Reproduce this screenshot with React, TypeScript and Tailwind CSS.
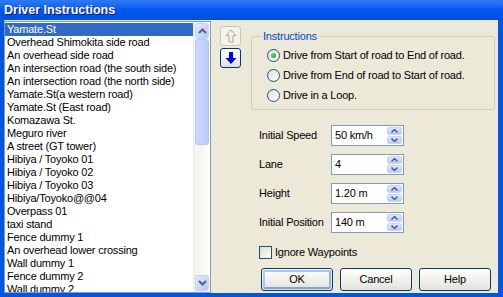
import React from "react";

const items = [
  "Yamate.St",
  "Overhead Shimokita side road",
  "An overhead side road",
  "An intersection road (the south side)",
  "An intersection road (the north side)",
  "Yamate.St(a western road)",
  "Yamate.St (East road)",
  "Komazawa St.",
  "Meguro river",
  "A street (GT tower)",
  "Hibiya / Toyoko 01",
  "Hibiya / Toyoko 02",
  "Hibiya / Toyoko 03",
  "Hibiya/Toyoko@@04",
  "Overpass 01",
  "taxi stand",
  "Fence dummy 1",
  "An overhead lower crossing",
  "Wall dummy 1",
  "Fence dummy 2",
  "Wall dummy 2",
];

function Chevron({ up }: { up?: boolean }) {
  return (
    <svg width="9" height="6" viewBox="0 0 9 6">
      <path
        d={up ? "M1 5 L4.5 1.5 L8 5" : "M1 1 L4.5 4.5 L8 1"}
        fill="none"
        stroke="#4D6185"
        strokeWidth="2"
      />
    </svg>
  );
}

function Spinner() {
  return (
    <div className="flex flex-col w-[15px] h-[17px] gap-[1px] mr-[1px]">
      <div className="flex-1 flex items-center justify-center rounded-[2px] bg-gradient-to-b from-[#DCE6FD] to-[#B9CCF8] border border-[#C3D3FD]">
        <svg width="7" height="4" viewBox="0 0 7 4">
          <path d="M0.5 3.5 L3.5 0.5 L6.5 3.5" fill="none" stroke="#4D6185" strokeWidth="1.5" />
        </svg>
      </div>
      <div className="flex-1 flex items-center justify-center rounded-[2px] bg-gradient-to-b from-[#DCE6FD] to-[#B9CCF8] border border-[#C3D3FD]">
        <svg width="7" height="4" viewBox="0 0 7 4">
          <path d="M0.5 0.5 L3.5 3.5 L6.5 0.5" fill="none" stroke="#4D6185" strokeWidth="1.5" />
        </svg>
      </div>
    </div>
  );
}

function Field({ label, value }: { label: string; value: string }) {
  return (
    <div className="flex items-center h-[21px]">
      <div className="w-[80px] pl-[8px]">{label}</div>
      <div className="w-[73px] h-[21px] border border-[#7F9DB9] bg-white flex items-center justify-between pl-[3px]">
        <span>{value}</span>
        <Spinner />
      </div>
    </div>
  );
}

function Radio({ checked, label }: { checked?: boolean; label: string }) {
  return (
    <div className="flex items-center h-[13px] gap-[3px]">
      <div className="w-[13px] h-[13px] rounded-full border border-[#1C5180] bg-gradient-to-br from-[#DCDCD7] to-white flex items-center justify-center">
        {checked && (
          <div className="w-[5px] h-[5px] rounded-full bg-[radial-gradient(circle_at_35%_35%,#5EDB5E,#1A9C1A)]" />
        )}
      </div>
      <span>{label}</span>
    </div>
  );
}

function XPButton({ label, def }: { label: string; def?: boolean }) {
  return (
    <div className="w-[72px] h-[23px] rounded-[3px] border border-[#003C74] bg-gradient-to-b from-white to-[#E3E2DA] flex items-center justify-center relative">
      {def && (
        <div className="absolute inset-[1px] rounded-[2px] border-2 border-[#A9C6F5] border-b-[#7DA2E4] border-r-[#8EB2EC]" />
      )}
      <span className="relative">{label}</span>
    </div>
  );
}

export default function App() {
  return (
    <div
      className="w-[503px] h-[297px] flex flex-col bg-[#0054E3] overflow-hidden text-[11px] tracking-[-0.2px] text-black"
      style={{ fontFamily: '"Liberation Sans", Arial, sans-serif' }}
    >
      <div className="h-[20px] shrink-0 bg-gradient-to-b from-[#2F7BF5] via-[#0058EE] to-[#0050DE] flex items-center pl-[4px]">
        <span
          className="text-white font-bold text-[12.5px] leading-none tracking-[0px]"
          style={{ textShadow: "1px 1px #0A1883" }}
        >
          Driver Instructions
        </span>
      </div>
      <div className="flex-1 flex pl-[4px] pr-[5px] pb-[4px] bg-[#0055E5]">
        <div className="flex-1 bg-[#ECE9D8] flex pt-[1px] overflow-hidden">
          {/* List box */}
          <div className="w-[207px] h-[272px] border border-[#7F9DB9] bg-white flex shrink-0 overflow-hidden">
            <div className="flex-1 flex flex-col overflow-hidden pt-[1px]">
              {items.map((it, i) => (
                <div
                  key={i}
                  className={
                    "h-[13px] leading-[13px] pl-[2px] whitespace-nowrap shrink-0 " +
                    (i === 0 ? "bg-[#316AC5] text-white" : "")
                  }
                >
                  {it}
                </div>
              ))}
            </div>
            <div className="w-[17px] flex flex-col bg-gradient-to-r from-[#F3F1EC] to-[#FEFEFB] border-l border-[#EEEDE5] px-[1px] pt-[1px]">
              <div className="h-[16px] shrink-0 rounded-[3px] bg-gradient-to-br from-[#E0E9FE] to-[#B7CAF5] border border-[#C3D3FD] flex items-center justify-center">
                <Chevron up />
              </div>
              <div className="h-[106px] shrink-0 rounded-[3px] bg-gradient-to-r from-[#CAD8FC] via-[#C4D4FC] to-[#B7CBF8] border border-[#B4C8F6]" />
              <div className="flex-1" />
              <div className="h-[16px] shrink-0 mb-[1px] rounded-[3px] bg-gradient-to-br from-[#E0E9FE] to-[#B7CAF5] border border-[#C3D3FD] flex items-center justify-center">
                <Chevron />
              </div>
            </div>
          </div>

          {/* Arrow buttons */}
          <div className="ml-[9px] mt-[5px] flex flex-col gap-[2px] shrink-0">
            <div className="w-[21px] h-[20px] rounded-[3px] border border-[#C9C7BA] bg-[#F4F3EE] flex items-center justify-center">
              <svg width="12" height="14" viewBox="0 0 12 14">
                <path d="M6 1 L11 6.5 L8 6.5 L8 13 L4 13 L4 6.5 L1 6.5 Z" fill="none" stroke="#ACA899" strokeWidth="1" />
              </svg>
            </div>
            <div className="w-[21px] h-[20px] rounded-[3px] border border-[#003C74] bg-gradient-to-b from-white to-[#E3E2DA] flex items-center justify-center">
              <svg width="12" height="14" viewBox="0 0 12 14">
                <path d="M4 1 L8 1 L8 7 L11.5 7 L6 13 L0.5 7 L4 7 Z" fill="#0000FF" />
              </svg>
            </div>
          </div>

          {/* Right column */}
          <div className="ml-[10px] flex flex-col w-[244px] shrink-0">
            <div className="mt-[15px] h-[74px] rounded-[3px] border border-[#D0D0BF] relative flex flex-col gap-[7px] pl-[15px] pt-[12px]">
              <div className="absolute left-[9px] top-[-8px] px-[2px] bg-[#ECE9D8] text-[#0046D5] leading-[14px]">
                Instructions
              </div>
              <Radio checked label="Drive from Start of road to End of road." />
              <Radio label="Drive from End of road to Start of road." />
              <Radio label="Drive in a Loop." />
            </div>
            <div className="mt-[15px] flex flex-col gap-[8px]">
              <Field label="Initial Speed" value="50 km/h" />
              <Field label="Lane" value="4" />
              <Field label="Height" value="1.20 m" />
              <Field label="Initial Position" value="140 m" />
            </div>
            <div className="mt-[13px] ml-[8px] flex items-center gap-[3px] h-[13px]">
              <div className="w-[13px] h-[13px] border border-[#1C5180] bg-gradient-to-br from-[#DCDCD7] to-white" />
              <span>Ignore Waypoints</span>
            </div>
            <div className="mt-[9px] ml-[10px] flex gap-[7px]">
              <XPButton label="OK" def />
              <XPButton label="Cancel" />
              <XPButton label="Help" />
            </div>
          </div>
        </div>
      </div>
    </div>
  );
}
